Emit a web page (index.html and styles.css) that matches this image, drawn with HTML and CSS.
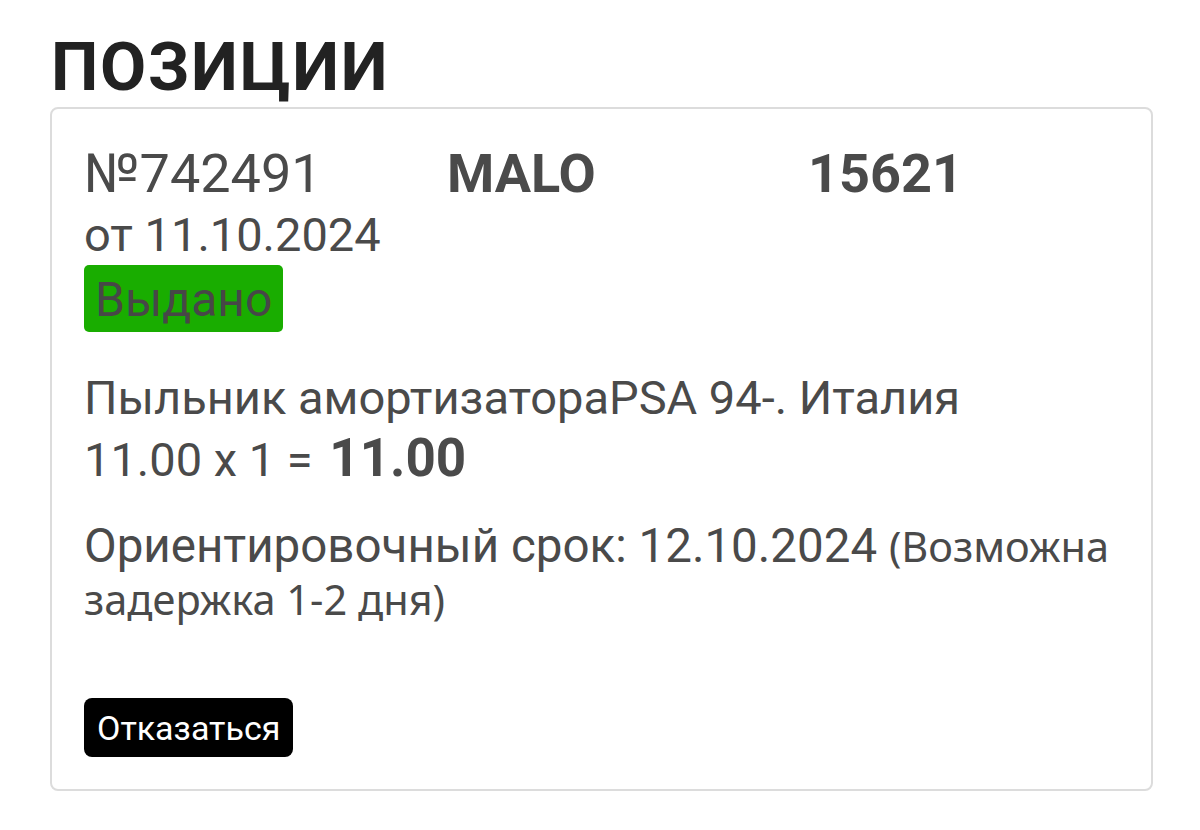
FILE: index.html
```html
<!DOCTYPE html>
<html lang="ru">
<head>
<meta charset="utf-8">
<title>Позиции</title>
<link rel="stylesheet" href="styles.css">
</head>
<body>
<main class="page">
  <h1 class="title">ПОЗИЦИИ</h1>
  <section class="card">
    <div class="head">
      <div class="col-order">
        <div class="order-no">№742491</div>
        <div class="order-date">от 11.10.2024</div>
        <span class="badge">Выдано</span>
      </div>
      <div class="col-brand">MALO</div>
      <div class="col-code">15621</div>
    </div>
    <p class="product">Пыльник амортизатораPSA 94-. Италия<br>11.00 x 1 = <b class="sum">11.00</b></p>
    <p class="term">Ориентировочный срок: 12.10.2024 <span class="note">(Возможна</span> <span class="note">задержка 1-2 дня)</span></p>
    <button class="btn" type="button">Отказаться</button>
  </section>
</main>
</body>
</html>
```

FILE: styles.css
```css
html, body {
  margin: 0;
  padding: 0;
  background: #ffffff;
}
body {
  font-family: Roboto, "Liberation Sans", Arial, sans-serif;
  color: #4a4a4a;
}
.page {
  padding: 27px 47px 0 50px;
}
.title {
  margin: 0 0 0 1px;
  font-size: 67px;
  line-height: 1.2;
  font-weight: 700;
  color: #222222;
  letter-spacing: 1.7px;
}
.card {
  border: 2px solid #dcdcdc;
  border-radius: 8px;
  padding: 34px 32px 32px 32px;
  width: 1035px;
}
.head {
  display: grid;
  grid-template-columns: 363px 361px 1fr;
  align-items: start;
}
.col-order {
  display: flex;
  flex-direction: column;
  align-items: flex-start;
}
.order-no {
  font-size: 54px;
  line-height: 62px;
}
.order-date {
  font-size: 47px;
  line-height: 60px;
}
.badge {
  display: inline-block;
  background: #19ad00;
  color: #474747;
  font-size: 48px;
  line-height: 57px;
  padding: 6px 11px 4px 11px;
  border-radius: 5px;
}
.col-brand, .col-code {
  font-size: 54px;
  line-height: 62px;
  font-weight: 700;
}
.product {
  margin: 35px 0 0 0;
  font-size: 47px;
  line-height: 61px;
}
.sum {
  margin-left: 5px;
  font-size: 53px;
  font-weight: 700;
}
.term {
  margin: 30px 0 0 0;
  font-size: 47.5px;
  line-height: 53px;
}
.note {
  font-family: "Noto Sans", "Open Sans", sans-serif;
  font-size: 41.5px;
}
.btn {
  display: block;
  margin-top: 72px;
  background: #000000;
  color: #ffffff;
  border: none;
  border-radius: 8px;
  font-family: Roboto, "Liberation Sans", Arial, sans-serif;
  font-size: 34px;
  line-height: 41px;
  padding: 10px 13px 8px 13px;
  cursor: pointer;
}
```
